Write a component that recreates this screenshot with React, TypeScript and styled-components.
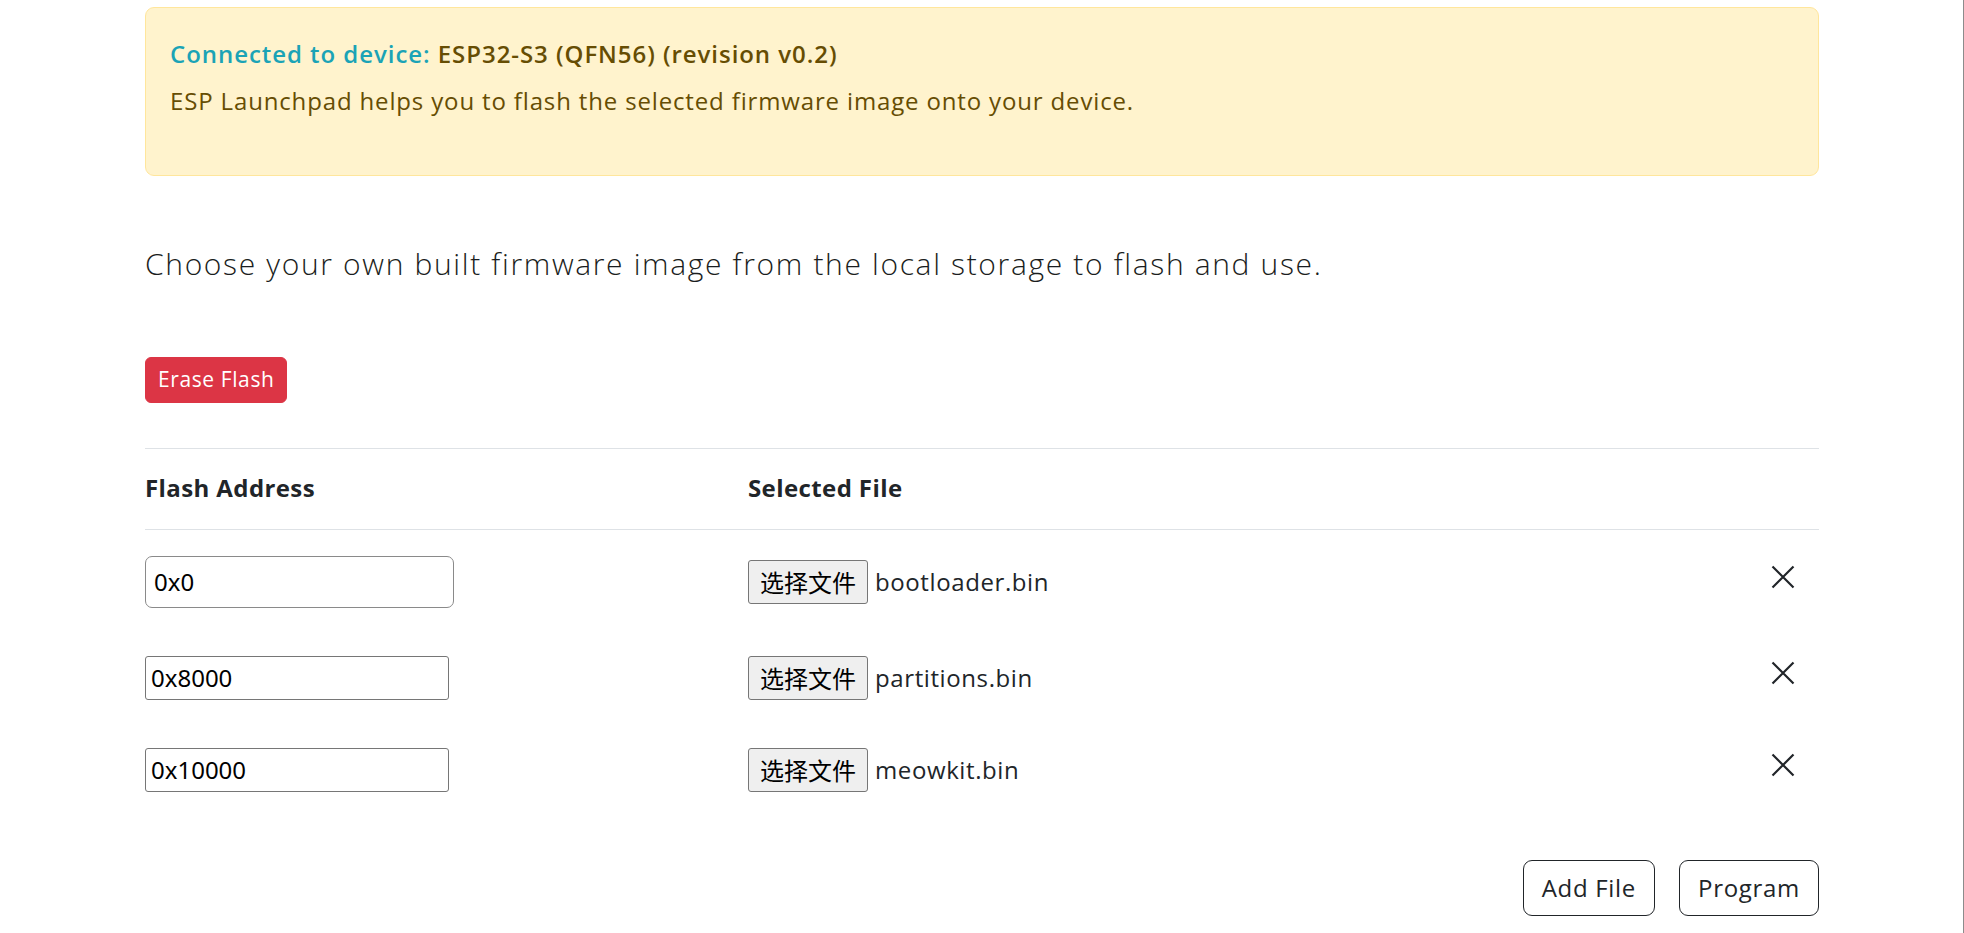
import React from 'react';
import styled, { createGlobalStyle } from 'styled-components';

interface FlashEntry {
  address: string;
  file: string;
}

const entries: FlashEntry[] = [
  { address: '0x0', file: 'bootloader.bin' },
  { address: '0x8000', file: 'partitions.bin' },
  { address: '0x10000', file: 'meowkit.bin' },
];

const CloseIcon: React.FC = () => (
  <svg width="24" height="24" viewBox="0 0 24 24" fill="none">
    <path d="M1.5 1.5 L22.5 22.5 M22.5 1.5 L1.5 22.5" stroke="#212529" strokeWidth="2.2" />
  </svg>
);

const App: React.FC = () => {
  return (
    <Page>
      <GlobalStyle />
      <Container>
        <Alert>
          <DeviceLine>
            <Accent>Connected to device: </Accent>
            ESP32-S3 (QFN56) (revision v0.2)
          </DeviceLine>
          <AlertText>ESP Launchpad helps you to flash the selected firmware image onto your device.</AlertText>
        </Alert>

        <Lead>Choose your own built firmware image from the local storage to flash and use.</Lead>

        <EraseButton type="button">Erase Flash</EraseButton>

        <Table>
          <HeaderRow>
            <HeaderCell>Flash Address</HeaderCell>
            <HeaderCell>Selected File</HeaderCell>
            <HeaderCell />
          </HeaderRow>
          {entries.map((entry, i) => (
            <Row key={entry.address}>
              <AddressInput $focused={i === 0} defaultValue={entry.address} />
              <FileCell>
                <FileButton type="button">选择文件</FileButton>
                <FileName>{entry.file}</FileName>
              </FileCell>
              <RemoveButton type="button" aria-label="remove">
                <CloseIcon />
              </RemoveButton>
            </Row>
          ))}
        </Table>

        <Actions>
          <OutlineButton type="button">Add File</OutlineButton>
          <OutlineButton type="button">Program</OutlineButton>
        </Actions>
      </Container>
    </Page>
  );
};

const GlobalStyle = createGlobalStyle`
  html, body {
    margin: 0;
    padding: 0;
    background: #fff;
  }
  body {
    font-family: "Open Sans", "Noto Sans CJK SC", sans-serif;
    color: #212529;
    letter-spacing: 0.6px;
  }
`;

const Page = styled.div`
  box-sizing: border-box;
  height: 100vh;
  overflow: hidden;
  border-right: 1px solid #8c8c8c;
`;

const Container = styled.main`
  width: 1674px;
  padding: 7px 0 0 145px;
`;

const Alert = styled.div`
  box-sizing: border-box;
  height: 169px;
  padding: 24px;
  background: #fff3cd;
  border: 1px solid #ffe69c;
  border-radius: 9px;
  color: #664d03;
`;

const DeviceLine = styled.p`
  margin: 4px 0 11px;
  font-size: 24px;
  line-height: 36px;
  font-weight: 600;
  letter-spacing: 0.95px;
`;

const Accent = styled.span`
  color: #1ba3b6;
`;

const AlertText = styled.p`
  margin: 0;
  font-size: 24px;
  line-height: 36px;
  letter-spacing: 0.85px;
`;

const Lead = styled.p`
  margin: 65px 0 71px;
  font-size: 30px;
  line-height: 45px;
  font-weight: 300;
  letter-spacing: 1.65px;
  color: #1a1d20;
`;

const EraseButton = styled.button`
  display: block;
  padding: 6px 12px;
  font-family: inherit;
  font-size: 21px;
  line-height: 31.5px;
  letter-spacing: 0.6px;
  color: #fff;
  background: #dc3545;
  border: 1px solid #dc3545;
  border-radius: 6px;
`;

const Table = styled.div`
  margin-top: 45px;
  border-top: 1px solid #dee2e6;
`;

const HeaderRow = styled.div`
  display: grid;
  grid-template-columns: 603px 1fr 48px;
  padding: 21px 0 23px;
  border-bottom: 1px solid #dee2e6;
`;

const HeaderCell = styled.div`
  font-size: 24px;
  line-height: 36px;
  font-weight: 700;
  letter-spacing: 0.4px;
`;

const Row = styled.div`
  display: grid;
  grid-template-columns: 603px 1fr 48px;
  align-items: center;
  padding: 26px 0 22px;
`;

const AddressInput = styled.input<{ $focused?: boolean }>`
  box-sizing: border-box;
  width: ${(p) => (p.$focused ? '309px' : '304px')};
  height: ${(p) => (p.$focused ? '52px' : '44px')};
  padding: 0 ${(p) => (p.$focused ? '8px' : '5px')};
  font-family: "Noto Sans", "Liberation Sans", sans-serif;
  font-size: 24px;
  letter-spacing: 0;
  color: #000;
  background: #fff;
  border: 1px solid ${(p) => (p.$focused ? '#8a8a8a' : '#767676')};
  border-radius: ${(p) => (p.$focused ? '7px' : '3px')};
  outline: none;
`;

const FileCell = styled.div`
  display: flex;
  align-items: center;
  gap: 7px;
`;

const FileButton = styled.button`
  box-sizing: border-box;
  width: 120px;
  height: 44px;
  padding: 0 9px;
  font-family: "Noto Sans CJK SC", sans-serif;
  font-size: 24px;
  letter-spacing: 0;
  color: #000;
  background: #efefef;
  border: 1px solid #767676;
  border-radius: 3px;
`;

const FileName = styled.span`
  font-size: 24px;
  line-height: 36px;
`;

const RemoveButton = styled.button`
  display: flex;
  width: 24px;
  height: 24px;
  padding: 0;
  margin-bottom: 9px;
  background: none;
  border: none;
`;

const Actions = styled.div`
  display: flex;
  justify-content: flex-end;
  gap: 24px;
  margin-top: 46px;
`;

const OutlineButton = styled.button`
  padding: 9px 18px;
  font-family: inherit;
  font-size: 24px;
  line-height: 36px;
  letter-spacing: 0.7px;
  color: #212529;
  background: #fff;
  border: 1px solid #212529;
  border-radius: 9px;
`;

export default App;
